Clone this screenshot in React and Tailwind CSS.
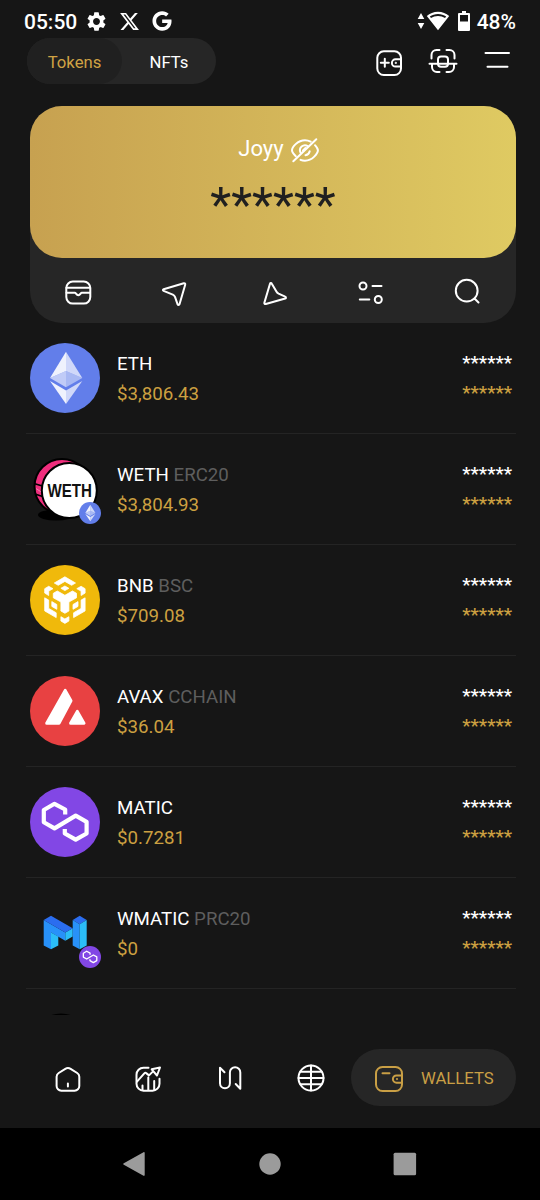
import { FaGoogle } from "react-icons/fa";
import { FaXTwitter } from "react-icons/fa6";
import { MdSettings } from "react-icons/md";

const iconProps = {
    fill: "none",
    stroke: "currentColor",
    strokeWidth: 2,
    strokeLinecap: "round",
    strokeLinejoin: "round",
};

/* Token logos */
const EthLogo = ({ className }) => (
    <svg viewBox="0 0 70 70" className={className}>
        <circle cx="35" cy="35" r="35" fill="#627eea" />
        <path d="M36 8.7 20 35l16-7z" fill="#fff" fillOpacity=".9" />
        <path d="M36 8.7 52.3 35 36 28z" fill="#fff" fillOpacity=".7" />
        <path d="M20 35l16-7v16.3z" fill="#fff" fillOpacity=".6" />
        <path d="M52.3 35 36 28v16.3z" fill="#fff" fillOpacity=".45" />
        <path d="M20 38l16 9.5V61z" fill="#fff" fillOpacity=".9" />
        <path d="M52.3 38 36 47.5V61z" fill="#fff" fillOpacity=".7" />
    </svg>
);

const WethLogo = ({ className }) => (
    <svg viewBox="0 0 70 70" className={className}>
        <ellipse cx="26" cy="61" rx="18" ry="5.5" fill="#000" />
        <circle cx="32" cy="32.5" r="27.5" fill="#f02d7d" stroke="#000" strokeWidth="2" />
        <path d="M4 29.5l10 3M5 40l9 3" stroke="#000" strokeWidth="1.6" />
        <path d="M6 34.5l6 4" stroke="#fff" strokeWidth=".8" opacity=".5" />
        <circle cx="39.3" cy="36.5" r="27.5" fill="#fff" stroke="#000" strokeWidth="2" />
        <text x="17.5" y="43" textLength="44.5" lengthAdjust="spacingAndGlyphs" fill="#111" fontFamily="Liberation Sans, sans-serif" fontWeight="700" fontSize="17.5">
            WETH
        </text>
    </svg>
);

const BnbLogo = ({ className }) => (
    <svg viewBox="0 0 70 70" className={className}>
        <circle cx="35" cy="35" r="35" fill="#f0b90b" />
        <g fill="#fff" stroke="#fff" strokeWidth=".8" strokeLinejoin="round">
            <path d="M24.3 18 34.9 11.8 45.5 18l-3.9 2.3-6.7-3.9-6.7 3.9z" />
            <path d="M30.9 23.3l4-2.3 4 2.3-4 2.3z" />
            <path d="M23.3 28.3l4-2.3 7.6 4.3 7.6-4.3 4 2.3v4.5L38.9 37v9l-4 2.3-4-2.3v-9l-7.6-4.2z" />
            <path d="M14.7 23.7l4-2.4 4.3 2.4-4.3 2.4v4.4l-4-2.4z" />
            <path d="M55.1 23.7l-4-2.4-4.3 2.4 4.3 2.4v4.4l4-2.4z" />
            <path d="M14.7 32.8l4 2.3v8.3l7.5 4.4v4.8l-11.5-6.7z" />
            <path d="M55.1 32.8l-4 2.3v8.3l-7.5 4.4v4.8l11.5-6.7z" />
            <path d="M21.8 36.6l5 2.9v4.8l-5-2.9z" />
            <path d="M48 36.6l-5 2.9v4.8l5-2.9z" />
            <path d="M30.9 51.7l4 2.3 4-2.3v4.3l-4 2.4-4-2.4z" />
        </g>
    </svg>
);

const AvaxLogo = ({ className }) => (
    <svg viewBox="0 0 70 70" className={className}>
        <circle cx="35" cy="35" r="35" fill="#e84142" />
        <g fill="#fff" stroke="#fff" strokeWidth="3" strokeLinejoin="round">
            <path d="M35.2 14.4 41 24.8 29 47.2H16.7z" />
            <path d="M47.3 35.4 54 47.2H40.6z" />
        </g>
    </svg>
);

const MaticLogo = ({ className }) => (
    <svg viewBox="0 0 70 70" className={className}>
        <circle cx="35" cy="35" r="35" fill="#8247e5" />
        <path
            d="M35.2 27.5v-5L24.5 16.8 13.8 23v12.3l10.7 6.1 21.2-12.8 10.9 6.2v11.7l-10.9 6.2-10.9-6.2v-4.6"
            fill="none"
            stroke="#fff"
            strokeWidth="4.2"
            strokeLinejoin="round"
        />
    </svg>
);

const WmaticLogo = ({ className }) => (
    <svg viewBox="0 0 70 70" className={className}>
        <path d="M13.7 22 35.3 34.4v8.4L21 34.5v16.8l-7.3-3.8z" fill="#2891f9" />
        <path d="M21 34.5l7.3 4v9L21 51.3z" fill="#2bbdf7" />
        <path d="M35.3 34.4l7.4-4.2v8.4l-7.4 4.2z" fill="#2bbdf7" />
        <path d="M21 17.7l-7.3 4.3 21.6 12.4 7.4-4.2z" fill="#2b6def" />
        <path d="M49.7 17.7l-7 4.3 7 4.2 7-4.2z" fill="#2b6def" />
        <path d="M42.7 22l7 4.2v25.1l-7-3.8z" fill="#2891f9" />
        <path d="M56.7 22l-7 4.2v25.1l7-3.8z" fill="#2bbdf7" />
    </svg>
);

const DarkLogo = ({ className }) => (
    <svg viewBox="0 0 70 70" className={className}>
        <circle cx="31" cy="36.5" r="32" fill="#000" />
    </svg>
);

const tokens = [
    { name: "ETH", price: "$3,806.43", Logo: EthLogo },
    { name: "WETH", chain: "ERC20", price: "$3,804.93", Logo: WethLogo, Badge: EthLogo },
    { name: "BNB", chain: "BSC", price: "$709.08", Logo: BnbLogo },
    { name: "AVAX", chain: "CCHAIN", price: "$36.04", Logo: AvaxLogo },
    { name: "MATIC", price: "$0.7281", Logo: MaticLogo },
    { name: "WMATIC", chain: "PRC20", price: "$0", Logo: WmaticLogo, Badge: MaticLogo },
    { name: "", price: "", Logo: DarkLogo },
];

function StatusBar() {
    return (
        <div className="flex h-[38px] shrink-0 items-center justify-between px-6 pt-1 text-white">
            <div className="flex items-center">
                <span className="w-[61px] pt-0.5 text-[21px] leading-6 font-medium">05:50</span>
                <MdSettings className="size-[23px]" />
                <FaXTwitter className="ml-[11px] size-[21px]" />
                <FaGoogle className="ml-3 size-[20px]" />
            </div>
            <div className="flex items-center">
                <svg viewBox="0 0 8 18" className="h-[18px] w-2" fill="currentColor">
                    <path d="M4 1l3.3 6H.7zM4 17l3.3-6H.7z" />
                </svg>
                <svg viewBox="0 0 24 20" className="ml-px h-5 w-6" fill="currentColor">
                    <path d="M12 .8C7.6.8 3.8 2.4.8 5L12 19.2 23.2 5C20.2 2.4 16.4.8 12 .8zm0 2.2c3 0 5.8.9 8.2 2.6L19 7.1C17 5.8 14.6 5 12 5s-5 .8-7 2.1L3.8 5.6C6.2 3.9 9 3 12 3z" fillRule="evenodd" />
                </svg>
                <svg viewBox="0 0 12 20" className="ml-2 h-5 w-3" fill="currentColor">
                    <path d="M4 0h4v2h3a1 1 0 0 1 1 1v16a1 1 0 0 1-1 1H1a1 1 0 0 1-1-1V3a1 1 0 0 1 1-1h3zM2 4v6.5h8V4z" fillRule="evenodd" />
                </svg>
                <span className="ml-[7px] pt-0.5 text-[21px] leading-6 font-medium">48%</span>
            </div>
        </div>
    );
}

function Header() {
    return (
        <header className="flex h-[46px] shrink-0 items-center justify-between px-[27px]">
            <div className="flex h-full w-[189px] rounded-full bg-[#262626] text-[16.7px]">
                <button className="w-[95px] rounded-full bg-[#202020] pt-1 text-[#d0a344]">Tokens</button>
                <button className="w-[94px] pt-1 text-white">NFTs</button>
            </div>
            <div className="flex gap-[22px] text-white">
                <svg viewBox="0 0 32 32" className="size-8" {...iconProps}>
                    <rect x="4.3" y="6.3" width="23.7" height="23.7" rx="6.5" />
                    <path d="M7.8 17.8h8M11.8 13.8v8M28 14.3h-5.5a3.6 3.6 0 0 0 0 7.2H28" />
                    <circle cx="22.8" cy="17.9" r=".4" strokeWidth="1.4" />
                </svg>
                <svg viewBox="0 0 32 32" className="size-8" {...iconProps}>
                    <path d="M4.5 13.5V10a5 5 0 0 1 5-5h3M19.5 5h3a5 5 0 0 1 5 5v3.5M2.5 18.7h27M5 19v3a5 5 0 0 0 5 5h2.5M19.5 27H22a5 5 0 0 0 5-5v-3" />
                    <rect x="11" y="11.5" width="10" height="10.3" rx="3" />
                </svg>
                <svg viewBox="0 0 32 32" className="size-8" {...iconProps}>
                    <path d="M4.5 8H28M6.5 21.7h20" />
                </svg>
            </div>
        </header>
    );
}

function BalanceCard() {
    return (
        <section className="mt-[22px] ml-[30px] h-[217px] w-[486px] shrink-0 rounded-[32px] bg-[#262626] text-white">
            <div className="flex h-[152px] flex-col items-center rounded-[32px] bg-gradient-to-r from-[#c7a150] to-[#dfca62]">
                <div className="mt-[29px] flex items-center gap-1.5 pl-3">
                    <span className="text-[22px] leading-[26px]">Joyy</span>
                    <svg viewBox="0 0 30 26" className="mt-0.5 h-[26px] w-[30px]" {...iconProps}>
                        <path d="M3.3 24.3 26.3 2.2" />
                        <path d="M5.8 19.2C3.5 17 2 14.7 2 13.3 2 10.3 7.5 3.2 15 3.2c2.1 0 4 .5 5.7 1.4M25 8.2c1.8 2 2.9 3.9 2.9 5.1 0 3-5.4 10.4-12.9 10.4-1.6 0-3.1-.3-4.5-.9" />
                        <path d="M10.5 15.5a5 5 0 0 1 7.2-6.4M19.7 14.3a5 5 0 0 1-4.2 3.9M13 13.5l2.5-2.5" />
                    </svg>
                </div>
                <div className="mt-[14px] text-[48.5px] leading-[56px] text-[#202020]">******</div>
            </div>
            <div className="flex gap-[65px] pt-[18px] pl-8">
                <svg viewBox="0 0 32 32" className="size-8" {...iconProps}>
                    <rect x="4.3" y="5.6" width="24" height="22" rx="6.5" />
                    <path d="M4.5 11.7h23.6M4.5 16.7h8.3c1.2 0 1.4 2.5 3.5 2.5s2.3-2.5 3.5-2.5h8.3" />
                </svg>
                <svg viewBox="0 0 32 32" className="size-8" {...iconProps}>
                    <path d="M4.6 13.2 24.8 7.3c1-.3 1.7.4 1.4 1.4L20.5 28.3c-.3 1-1.5 1-1.9 0L16 20.8c-.4-1-1.2-1.7-2.2-2.2l-9.2-3.7c-.9-.4-.9-1.4 0-1.7z" />
                </svg>
                <svg viewBox="0 0 32 32" className="size-8" {...iconProps}>
                    <path d="M14 7.7 8.4 26.6c-.3 1 .4 1.7 1.4 1.4l19.4-5.5c1-.3 1-1.4 0-1.8l-6.6-3c-1-.5-1.7-1.2-2.2-2.2L15.8 7.7c-.4-.9-1.5-.9-1.8 0z" />
                </svg>
                <svg viewBox="0 0 32 32" className="size-8" {...iconProps}>
                    <circle cx="10" cy="10" r="3.5" />
                    <circle cx="25.3" cy="23.5" r="3.5" />
                    <path d="M19.5 10h9M6.8 23.5h9.5" />
                </svg>
                <svg viewBox="0 0 32 32" className="size-8" {...iconProps}>
                    <circle cx="16.7" cy="14.7" r="10.9" />
                    <path d="M24.5 22.5l4 4" />
                </svg>
            </div>
        </section>
    );
}

function TokenRow({ name, chain, price, Logo, Badge }) {
    return (
        <div className="ml-[26px] flex h-[111px] w-[490px] items-center border-b border-[#242424] pr-1 pl-1">
            <div className="relative size-[70px] shrink-0">
                <Logo className="size-[70px]" />
                {Badge && <Badge className="absolute top-12 left-[49px] size-[22px]" />}
            </div>
            <div className="ml-[17px] flex-1 pt-0.5 text-[18.7px] leading-[30px]">
                <div className="text-white">
                    {name} {chain && <span className="text-[#5e5e5e]">{chain}</span>}
                </div>
                <div className="text-[#cca041]">{price}</div>
            </div>
            {name && (
                <div className="text-[18.7px] leading-[30px] font-medium">
                    <div className="text-white">******</div>
                    <div className="text-[#cca041]">******</div>
                </div>
            )}
        </div>
    );
}

function BottomNav() {
    return (
        <nav className="flex h-[113px] shrink-0 items-start pt-[34px] pl-[52px]">
            <div className="flex h-[57px] items-center gap-[50px] text-white">
                <svg viewBox="0 0 31 31" className="size-[31px]" {...iconProps}>
                    <path d="M13.3 6.8 6.7 11a4.5 4.5 0 0 0-2.1 3.8V24a4.7 4.7 0 0 0 4.7 4.7h13.3a4.7 4.7 0 0 0 4.7-4.7v-9.2a4.5 4.5 0 0 0-2.1-3.8l-6.6-4.2a5 5 0 0 0-5.3 0zM15.9 21.5v3" />
                </svg>
                <svg viewBox="0 0 31 31" className="size-[31px]" {...iconProps}>
                    <path d="M15.5 5.7h-5a7 7 0 0 0-7 7v9a7 7 0 0 0 7 7h9a7 7 0 0 0 7-7v-5" />
                    <path d="M4 19.7l7.3-8.3c.8-.8 1.5-.7 2.2 0l2.5 2 4-4M18.7 7.3l8.3-1.8-3 8zM9.5 23.5V28M15.3 15.5V28M21.2 19v9" />
                </svg>
                <svg viewBox="0 0 31 31" className="size-[31px]" {...iconProps}>
                    <path d="M10.5 10.3 6 5.7v15.5a4.9 4.9 0 0 0 9.9 0V10.5a5.2 5.2 0 0 1 10.4 0v16.2l-4.6-4.7" />
                </svg>
                <svg viewBox="0 0 31 31" className="size-[31px]" {...iconProps}>
                    <circle cx="16" cy="16" r="12.5" />
                    <path d="M16 3.5v25M5.5 9.7h21M3.5 16h25M5.5 22.3h21" />
                </svg>
            </div>
            <button className="ml-[25px] flex h-[57px] w-[165px] items-center rounded-full bg-[#262626] pl-[22px] text-[#c99f45]">
                <svg viewBox="0 0 31 31" className="size-[31px]" {...iconProps}>
                    <rect x="3" y="5" width="26" height="24" rx="6.5" />
                    <path d="M9.5 11.3h7M29 13.5h-5.5a3.5 3.5 0 0 0 0 7.2H29" />
                    <circle cx="24" cy="17.1" r=".4" strokeWidth="1.4" />
                </svg>
                <span className="ml-[17px] pt-[3px] text-[16.7px]">WALLETS</span>
            </button>
        </nav>
    );
}

function SystemBar() {
    return (
        <div className="flex h-[72px] shrink-0 items-center justify-center gap-[111px] bg-black text-[#9b9b9b]">
            <svg viewBox="0 0 24 24" className="size-6" fill="currentColor">
                <path d="M.8 11.2 20.5.2c.7-.4 1.2 0 1.2.7v22.2c0 .7-.5 1.1-1.2.7L.8 12.8c-.7-.4-.7-1.2 0-1.6z" />
            </svg>
            <svg viewBox="0 0 24 24" className="size-6" fill="currentColor">
                <circle cx="12" cy="12" r="10.7" />
            </svg>
            <svg viewBox="0 0 24 24" className="size-6" fill="currentColor">
                <rect x=".6" y=".8" width="22.5" height="22.5" rx="1.5" />
            </svg>
        </div>
    );
}

export default function App() {
    return (
        <div className="flex h-[1200px] w-[540px] flex-col overflow-hidden bg-[#161616] font-[Roboto,sans-serif]">
            <StatusBar />
            <Header />
            <BalanceCard />
            <main className="h-[692px] shrink-0 overflow-hidden">
                {tokens.map((token, i) => (
                    <TokenRow key={i} {...token} />
                ))}
            </main>
            <BottomNav />
            <SystemBar />
        </div>
    );
}
